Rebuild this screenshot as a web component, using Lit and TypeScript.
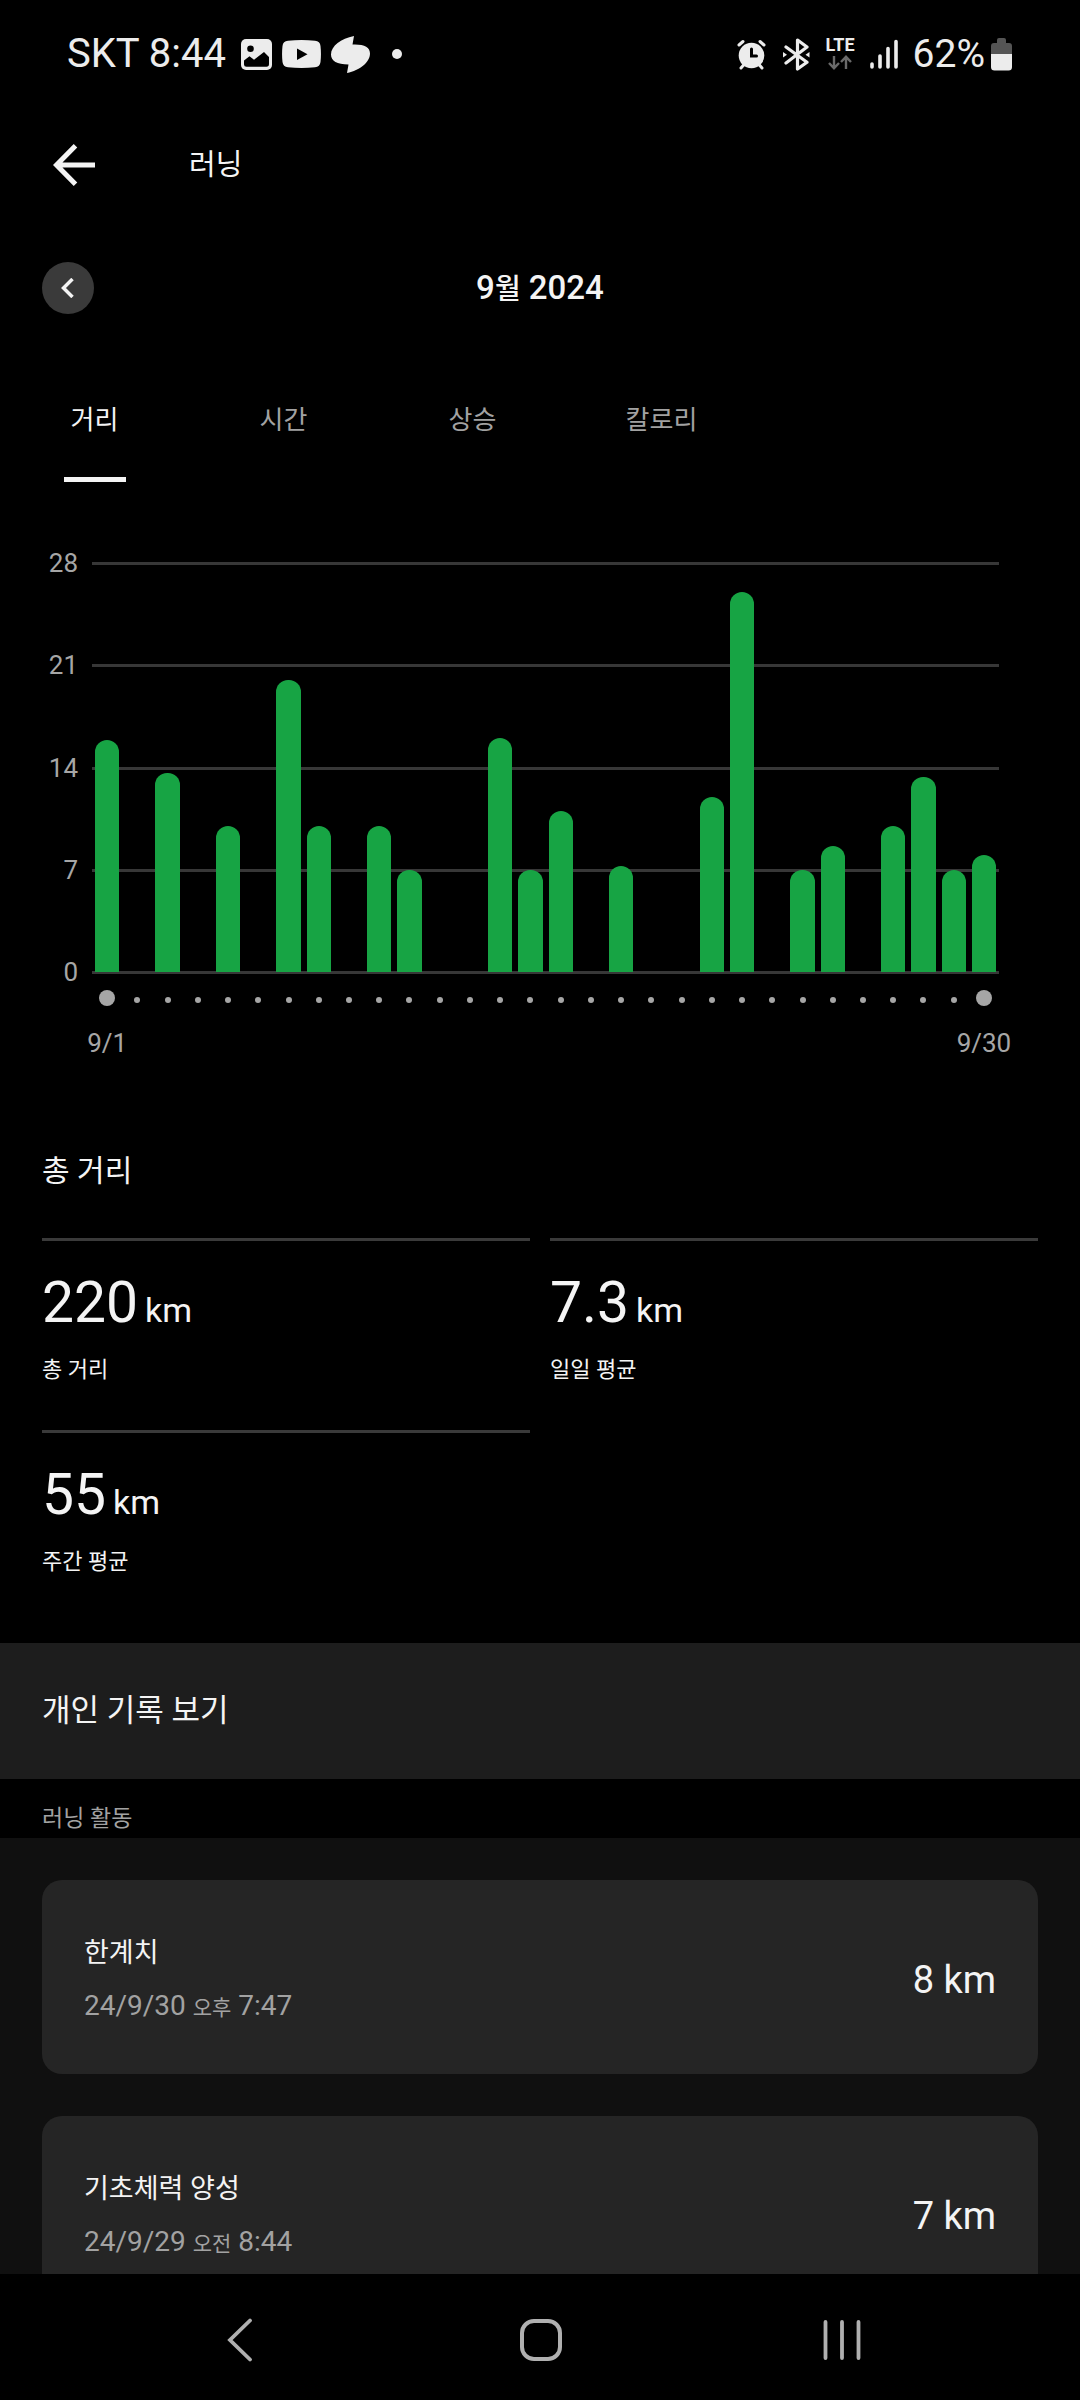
import { LitElement, html, css, nothing } from "lit";
import { customElement, property, state } from "lit/decorators.js";
import { classMap } from "lit/directives/class-map.js";

const FONT = css`Roboto, "Noto Sans CJK KR", sans-serif`;

@customElement("status-bar")
class StatusBar extends LitElement {
  static styles = css`
    :host {
      display: flex;
      justify-content: space-between;
      align-items: center;
      padding: 31px 68px 0 67px;
      color: #ececec;
      font: 400 39px/46px ${FONT};
    }
    .group {
      display: flex;
      align-items: center;
      gap: 15px;
    }
    .clock {
      font-size: 40px;
    }
    .notices {
      display: flex;
      align-items: center;
      gap: 10px;
    }
    .more {
      width: 10px;
      height: 10px;
      margin-left: 12px;
      border-radius: 50%;
      background: currentColor;
    }
    .network {
      display: flex;
      flex-direction: column;
      align-items: center;
      gap: 3px;
      font-size: 18px;
      font-weight: 700;
      line-height: 14px;
    }
    .charge {
      display: flex;
      align-items: center;
      gap: 6px;
    }
    svg {
      display: block;
    }
  `;

  render() {
    return html`
      <div class="group">
        <span class="clock">SKT 8:44</span>
        <div class="notices">
          <svg width="31" height="31" viewBox="0 0 31 31" aria-hidden="true">
            <rect width="31" height="31" rx="5" fill="#ececec" />
            <circle cx="9.5" cy="9.7" r="3.3" fill="#000" />
            <path d="M3 21.5 8.5 17.3 13 20.7 23 13 28 18V25Q28 27.8 25.5 27.8H5.5Q3 27.8 3 25.5Z" fill="#000" />
          </svg>
          <svg width="39" height="28" viewBox="0 0 39 28" aria-hidden="true">
            <path d="M6 .8Q19.500-.8 33 .8 38 1.300 38.500 6 39.400 14 38.500 22 38 26.700 33 27.200 19.500 28.800 6 27.200 1 26.700.5 22-.4 14 .5 6 1 1.300 6 .8Z" fill="#ececec" />
            <path d="M15 8.500V20L25.500 14.300Z" fill="#000" />
          </svg>
          <svg width="39" height="37" viewBox="0 0 39 37" aria-hidden="true">
            <path d="M23 0C10 2.500 0 10 0 18.500 0 25 6 28.500 17.500 28.500L16 37C29 34.500 39 26 39 17.500 39 11 33 8 21.500 8.500Z" fill="#ececec" />
          </svg>
          <span class="more"></span>
        </div>
      </div>
      <div class="group">
        <svg width="30" height="31" viewBox="0 0 30 31" fill="none" stroke="#ececec" stroke-width="3" stroke-linecap="round" aria-hidden="true">
          <circle cx="14.500" cy="16.500" r="12.800" fill="#ececec" stroke="none" />
          <path d="M2 6 6 2.500M27 6 23 2.500M4 29 7 25.500M25 29 22 25.500" />
          <path d="M14.500 10V17H19.500" stroke="#000" />
        </svg>
        <svg width="29" height="33" viewBox="0 0 29 33" fill="none" stroke="#ececec" stroke-width="3.200" stroke-linecap="round" stroke-linejoin="round" aria-hidden="true">
          <path d="M4 9 25 24.300 15.500 31V2L25 9 4 25" />
          <path d="M1 14V19.500L5 16.800ZM27.500 14V19.500L23.500 16.800Z" fill="#ececec" stroke="none" />
        </svg>
        <div class="network">
          <span>LTE</span>
          <svg width="24" height="15" viewBox="0 0 24 15" fill="none" stroke="#6a6a6a" stroke-width="2.400" aria-hidden="true">
            <path d="M6 1V13M1 8 6 13.200 11 8M18 14V2M13 7 18 1.800 23 7" />
          </svg>
        </div>
        <svg width="28" height="31" viewBox="0 0 28 31" stroke="#ececec" stroke-width="3.600" stroke-linecap="round" aria-hidden="true">
          <path d="M2 28V25M10 28V17M18 28V9.500M26 28V2.500" />
        </svg>
        <div class="charge">
          <span>62%</span>
          <svg width="21" height="33" viewBox="0 0 21 33" aria-hidden="true">
            <path d="M6 5V2Q6 0 8 0H13Q15 0 15 2V5H18Q21 5 21 8V17H0V8Q0 5 3 5Z" fill="#555" />
            <path d="M0 16H21V29Q21 32.500 17.500 32.500H3.500Q0 32.500 0 29Z" fill="#ececec" />
          </svg>
        </div>
      </div>
    `;
  }
}

@customElement("distance-chart")
class DistanceChart extends LitElement {
  @property({ attribute: false }) values: number[] = [];
  @property({ type: Number }) max = 28;
  @property({ type: Number }) month = 9;

  static styles = css`
    :host {
      display: grid;
      grid-template-columns: 36px 1fr;
      column-gap: 14px;
      padding: 80px 81px 0 42px;
      color: #a6a6a6;
      font: 400 26px/30px ${FONT};
    }
    .scale,
    .rules {
      display: flex;
      flex-direction: column;
      justify-content: space-between;
      height: 412px;
    }
    .tick {
      height: 3px;
      line-height: 3px;
      text-align: right;
    }
    .plot {
      display: grid;
    }
    .rules,
    .bars {
      grid-area: 1 / 1;
    }
    .rule {
      height: 3px;
      background: #373737;
    }
    .bars {
      display: flex;
      margin: 1px 0 2px;
    }
    .slot {
      display: flex;
      flex: 1;
      align-items: flex-end;
      padding: 0 3px;
    }
    .bar {
      width: 100%;
      border-radius: 12px 12px 0 0;
      background: #17a444;
    }
    .days {
      grid-column: 2;
      display: flex;
      padding-top: 15px;
    }
    .day {
      display: flex;
      flex: 1 1 0;
      min-width: 0;
      flex-direction: column;
      align-items: center;
      gap: 22px;
    }
    .mark {
      display: grid;
      place-items: center;
      height: 17px;
    }
    .dot {
      width: 6px;
      height: 6px;
      margin-top: 4px;
      border-radius: 50%;
      background: currentColor;
    }
    .end {
      width: 16px;
      height: 16px;
      margin-top: 0;
    }
    .date {
      white-space: nowrap;
    }
  `;

  render() {
    const ticks = [4, 3, 2, 1, 0].map((n) => (this.max / 4) * n);
    const last = this.values.length - 1;
    return html`
      <div class="scale">${ticks.map((t) => html`<span class="tick">${t}</span>`)}</div>
      <div class="plot">
        <div class="rules">${ticks.map(() => html`<div class="rule"></div>`)}</div>
        <div class="bars">
          ${this.values.map(
            (v) => html`<div class="slot">
              ${v ? html`<div class="bar" style="height:${(v / this.max) * 100}%"></div>` : nothing}
            </div>`
          )}
        </div>
      </div>
      <div class="days">
        ${this.values.map((_, i) => {
          const end = i === 0 || i === last;
          return html`<div class="day">
            <div class="mark"><span class=${classMap({ dot: true, end })}></span></div>
            ${end ? html`<span class="date">${this.month}/${i + 1}</span>` : nothing}
          </div>`;
        })}
      </div>
    `;
  }
}

interface Stat {
  value: string;
  label: string;
}

interface Activity {
  title: string;
  date: string;
  half: string;
  time: string;
  km: number;
}

const TABS = ["거리", "시간", "상승", "칼로리"];

const DAILY = [
  15.9, 0, 13.6, 0, 10, 0, 20, 10, 0, 10, 7, 0, 0, 16, 7, 11, 0, 7.25, 0, 0, 12, 26, 0, 7, 8.6, 0, 10, 13.35, 7, 8,
];

const STATS: Stat[] = [
  { value: "220", label: "총 거리" },
  { value: "7.3", label: "일일 평균" },
  { value: "55", label: "주간 평균" },
];

const ACTIVITIES: Activity[] = [
  { title: "한계치", date: "24/9/30", half: "오후", time: "7:47", km: 8 },
  { title: "기초체력 양성", date: "24/9/29", half: "오전", time: "8:44", km: 7 },
];

@customElement("app-root")
class AppRoot extends LitElement {
  @state() private tab = 0;

  static styles = css`
    :host {
      display: flex;
      flex-direction: column;
      height: 100vh;
      background: #000;
      color: #f4f4f4;
      font: 400 28px/36px ${FONT};
    }
    button,
    a {
      margin: 0;
      padding: 0;
      border: 0;
      background: none;
      color: inherit;
      font: inherit;
      text-decoration: none;
      cursor: pointer;
    }
    h1,
    h2,
    h3,
    p,
    ul,
    dl,
    dd {
      margin: 0;
      padding: 0;
      font-weight: inherit;
      list-style: none;
    }
    svg {
      display: block;
    }
    .head {
      display: flex;
      align-items: center;
      gap: 94px;
      padding: 62px 42px 0 53px;
    }
    .back {
      display: grid;
      place-items: center start;
      height: 52px;
    }
    .title {
      font-size: 29px;
    }
    .period {
      display: grid;
      grid-template-columns: 1fr auto 1fr;
      align-items: center;
      padding: 71px 42px 0;
    }
    .previous {
      display: grid;
      place-items: center;
      width: 52px;
      height: 52px;
      border-radius: 50%;
      background: #3a3a3a;
    }
    .month {
      padding-top: 2px;
      font-size: 33px;
      font-weight: 500;
    }
    .month-unit {
      font-size: 28px;
    }
    .tabs {
      display: flex;
      padding-top: 84px;
    }
    .tab {
      display: flex;
      flex-direction: column;
      align-items: center;
      gap: 35px;
      width: 17.5%;
      color: #a2a2a2;
      font-size: 26px;
      line-height: 44px;
    }
    .tab::after {
      content: "";
      width: 62px;
      height: 5px;
    }
    .selected {
      color: #f4f4f4;
    }
    .selected::after {
      background: currentColor;
    }
    .content {
      flex: 1;
      min-height: 0;
      overflow-y: auto;
      scrollbar-width: none;
    }
    .summary {
      padding: 93px 42px 66px;
    }
    .heading {
      font-size: 30px;
      line-height: 40px;
    }
    .stats {
      display: grid;
      grid-template-columns: 1fr 1fr;
      gap: 45px 20px;
      padding-top: 47px;
    }
    .stat {
      display: flex;
      flex-direction: column-reverse;
      gap: 18px;
      padding-top: 28px;
      border-top: 3px solid #3a3a3a;
    }
    .figure {
      display: flex;
      align-items: baseline;
      gap: 7px;
      font-size: 57px;
      line-height: 68px;
    }
    .unit {
      font-size: 34px;
      line-height: 40px;
    }
    .caption {
      font-size: 22px;
      line-height: 30px;
    }
    .records {
      display: block;
      padding: 48px 42px;
      background: #1d1d1d;
      font-size: 31px;
      line-height: 40px;
    }
    .subhead {
      padding: 24px 42px 3px;
      color: #a2a2a2;
      font-size: 23px;
      line-height: 32px;
    }
    .list {
      display: flex;
      flex-direction: column;
      gap: 42px;
      padding: 42px;
      background: #101010;
    }
    .card {
      display: flex;
      align-items: center;
      justify-content: space-between;
      padding: 55px 42px 50px;
      border-radius: 20px;
      background: #252525;
    }
    .about {
      display: flex;
      flex-direction: column;
      gap: 17px;
    }
    .name {
      font-size: 27px;
      line-height: 36px;
    }
    .when {
      color: #a2a2a2;
    }
    .half {
      font-size: 21px;
      line-height: 28px;
    }
    .length {
      font-size: 38px;
      line-height: 44px;
    }
    .system {
      display: flex;
      flex: none;
      height: 126px;
      padding: 0 88px 0 90px;
    }
    .key {
      display: grid;
      flex: 1;
      place-items: center;
      padding-top: 6px;
    }
  `;

  render() {
    return html`
      <status-bar></status-bar>
      <main class="content">
        <header class="head">
          <button class="back" aria-label="뒤로">
            <svg width="42" height="42" viewBox="0 0 42 42" fill="none" stroke="#f4f4f4" stroke-width="5">
              <path d="M42 21H4M22.500 1.800 3.500 21 22.500 40.200" />
            </svg>
          </button>
          <h1 class="title">러닝</h1>
        </header>
        <div class="period">
          <button class="previous" aria-label="이전 달">
            <svg width="14" height="20" viewBox="0 0 14 20" fill="none" stroke="#f4f4f4" stroke-width="3.500">
              <path d="M11.500 1 2.500 10 11.500 19" />
            </svg>
          </button>
          <h2 class="month">9<span class="month-unit">월</span> 2024</h2>
        </div>
        <div class="tabs" role="tablist">
          ${TABS.map(
            (name, i) => html`<button
              role="tab"
              aria-selected=${i === this.tab ? "true" : "false"}
              class=${classMap({ tab: true, selected: i === this.tab })}
              @click=${() => (this.tab = i)}
            >${name}</button>`
          )}
        </div>
        <distance-chart .values=${DAILY}></distance-chart>
        <section class="summary">
          <h2 class="heading">총 거리</h2>
          <dl class="stats">
            ${STATS.map(
              (s) => html`<div class="stat">
                <dt class="caption">${s.label}</dt>
                <dd class="figure">${s.value}<span class="unit">km</span></dd>
              </div>`
            )}
          </dl>
        </section>
        <a class="records" href="#records">개인 기록 보기</a>
        <h2 class="subhead">러닝 활동</h2>
        <ul class="list">
          ${ACTIVITIES.map(
            (a) => html`<li>
              <a class="card" href="#activity">
                <div class="about">
                  <h3 class="name">${a.title}</h3>
                  <p class="when">${a.date} <span class="half">${a.half}</span> ${a.time}</p>
                </div>
                <span class="length">${a.km} km</span>
              </a>
            </li>`
          )}
        </ul>
      </main>
      <nav class="system">
        <button class="key" aria-label="이전">
          <svg width="26" height="44" viewBox="0 0 26 44" fill="none" stroke="#b0b0b0" stroke-width="3.800" stroke-linecap="round">
            <path d="M23 2.500 3 22 23 41.500" />
          </svg>
        </button>
        <button class="key" aria-label="홈">
          <svg width="42" height="42" viewBox="0 0 42 42" fill="none" stroke="#b0b0b0" stroke-width="4">
            <rect x="2" y="2" width="38" height="38" rx="12" />
          </svg>
        </button>
        <button class="key" aria-label="최근 앱">
          <svg width="38" height="40" viewBox="0 0 38 40" stroke="#b0b0b0" stroke-width="3.800" stroke-linecap="round">
            <path d="M2.500 2V38M19 2V38M35.500 2V38" />
          </svg>
        </button>
      </nav>
    `;
  }
}
